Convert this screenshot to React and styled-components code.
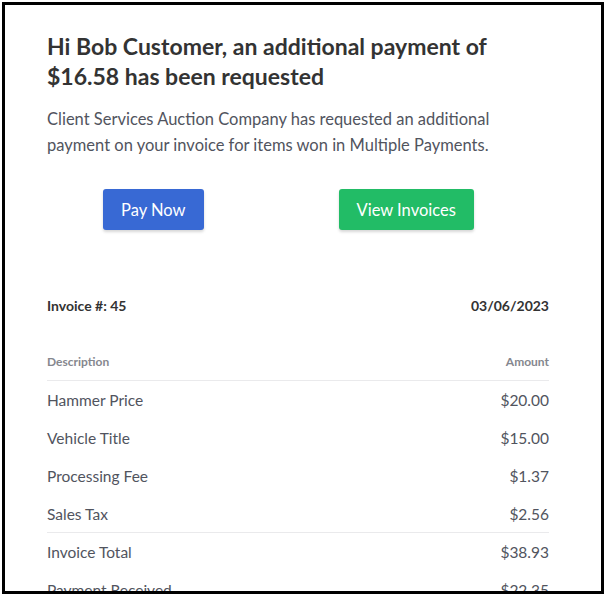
import React from "react";
import styled, { createGlobalStyle } from "styled-components";

const Global = createGlobalStyle`
  html, body { margin: 0; padding: 0; background: #ffffff; }
  body { font-family: Lato, "Noto Sans", Arial, sans-serif; -webkit-font-smoothing: antialiased; }
  * { box-sizing: border-box; }
`;

const Frame = styled.div`
  margin: 2px 0 0 2px;
  width: 602px;
  height: 592px;
  border: 3px solid #000000;
  overflow: hidden;
  background: #ffffff;
`;

const Content = styled.div`
  padding: 26px 52px 0 42px;
  display: flex;
  flex-direction: column;
`;

const Heading = styled.h1`
  margin: 0;
  font-size: 23px;
  line-height: 30px;
  font-weight: 700;
  color: #333333;
`;

const Lead = styled.p`
  margin: 15px 0 0;
  max-width: 460px;
  font-size: 16.5px;
  line-height: 26px;
  color: #51545e;
`;

const ButtonRow = styled.div`
  display: flex;
  gap: 135px;
  margin-top: 31px;
  padding-left: 56px;
`;

const Button = styled.a`
  display: inline-flex;
  align-items: center;
  justify-content: center;
  height: 41px;
  padding: 0 18px;
  border-radius: 3px;
  background: ${(p) => (p.$tone === "green" ? "#22bc66" : "#3869d4")};
  color: #ffffff;
  font-size: 16.5px;
  text-decoration: none;
  box-shadow: 0 2px 3px rgba(0, 0, 0, 0.16);
  cursor: pointer;
`;

const InvoiceMeta = styled.div`
  display: flex;
  justify-content: space-between;
  align-items: center;
  height: 30px;
  margin-top: 60px;
  font-size: 14px;
  font-weight: 700;
  color: #333333;
`;

const Table = styled.div`
  margin-top: 23px;
  display: flex;
  flex-direction: column;
`;

const Row = styled.div`
  display: flex;
  justify-content: space-between;
  align-items: center;
  height: 38px;
  font-size: ${(p) => (p.$head ? "12px" : "15.5px")};
  font-weight: ${(p) => (p.$head ? 700 : 400)};
  color: ${(p) => (p.$head ? "#85878e" : "#51545e")};
  border-bottom: ${(p) => (p.$rule ? "1px solid #eaeaec" : "none")};
`;

const items = [
  { label: "Hammer Price", amount: "$20.00" },
  { label: "Vehicle Title", amount: "$15.00" },
  { label: "Processing Fee", amount: "$1.37" },
  { label: "Sales Tax", amount: "$2.56", rule: true },
  { label: "Invoice Total", amount: "$38.93" },
  { label: "Payment Received", amount: "$22.35" },
];

export default function App() {
  return (
    <>
      <Global />
      <Frame>
        <Content>
          <Heading>
            Hi Bob Customer, an additional payment of
            <br />
            $16.58 has been requested
          </Heading>
          <Lead>
            Client Services Auction Company has requested an additional
            payment on your invoice for items won in Multiple Payments.
          </Lead>
          <ButtonRow>
            <Button>Pay Now</Button>
            <Button $tone="green">View Invoices</Button>
          </ButtonRow>
          <InvoiceMeta>
            <span>Invoice #: 45</span>
            <span>03/06/2023</span>
          </InvoiceMeta>
          <Table>
            <Row $head $rule>
              <span>Description</span>
              <span>Amount</span>
            </Row>
            {items.map((it) => (
              <Row key={it.label} $rule={it.rule}>
                <span>{it.label}</span>
                <span>{it.amount}</span>
              </Row>
            ))}
          </Table>
        </Content>
      </Frame>
    </>
  );
}
